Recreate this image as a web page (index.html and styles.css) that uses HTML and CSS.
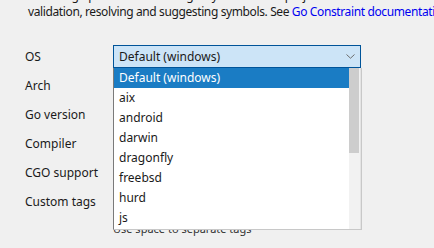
FILE: index.html
```html
<!DOCTYPE html>
<html lang="en">
  <head>
    <meta charset="utf-8" />
    <title>Go Build Tags</title>
    <link rel="stylesheet" href="styles.css">
  </head>
  <body>
    <p class="intro">
      Following options describe target system for the project. IDE will use these values for<br />
      validation, resolving and suggesting symbols. See <a href="#">Go Constraint documentation</a>
    </p>

    <div class="form">
      <div class="row">
        <label>OS</label>
        <div class="combo open">
          <span>Default (windows)</span>
          <svg class="chev" width="9" height="5" viewBox="0 0 9 5">
            <path d="M0.5 0.5 L4.5 4.2 L8.5 0.5" fill="none" stroke="#6d6d6d" stroke-width="1" />
          </svg>
          <div class="popup">
            <ul class="list">
              <li class="sel">Default (windows)</li>
              <li>aix</li>
              <li>android</li>
              <li>darwin</li>
              <li>dragonfly</li>
              <li>freebsd</li>
              <li>hurd</li>
              <li>js</li>
            </ul>
            <div class="scroll"><div class="thumb"></div></div>
          </div>
        </div>
      </div>
      <div class="row"><label>Arch</label><div class="combo"></div></div>
      <div class="row"><label>Go version</label><div class="combo"></div></div>
      <div class="row"><label>Compiler</label><div class="combo"></div></div>
      <div class="row"><label>CGO support</label><div class="combo"></div></div>
      <div class="row"><label>Custom tags</label><div class="combo"></div></div>
      <div class="hint">Use space to separate tags</div>
    </div>
  </body>
</html>
```

FILE: styles.css
```css
body {
  margin: 0;
  background: #f0f0f0;
  font-family: "Segoe UI", "Noto Sans", sans-serif;
  font-size: 12px;
  color: #1a1a1a;
  overflow: hidden;
}
.intro {
  margin: -12px 0 0 28px;
  line-height: 16px;
  letter-spacing: -0.38px;
  white-space: nowrap;
}
.intro a {
  color: #0000f0;
  text-decoration: none;
}
.form {
  margin: 25px 0 0 25px;
  display: flex;
  flex-direction: column;
  gap: 6px;
}
.row {
  display: flex;
  align-items: center;
  height: 23px;
}
.row label {
  width: 88px;
}
.combo {
  width: 248px;
  height: 23px;
  box-sizing: border-box;
  position: relative;
}
.combo.open {
  background: #cce4f7;
  border: 1px solid #005499;
  display: flex;
  align-items: center;
  padding-left: 5px;
}
.chev {
  position: absolute;
  right: 5px;
  top: 8px;
}
.popup {
  position: absolute;
  left: -1px;
  top: 22px;
  width: 249px;
  height: 162px;
  box-sizing: border-box;
  background: #fff;
  border: 1px solid #c8c8c8;
  border-top: none;
  border-left-color: #7a7a7a;
  display: flex;
  z-index: 1;
}
.list {
  list-style: none;
  margin: 0;
  padding: 0;
  flex: 1;
}
.list li {
  height: 20px;
  line-height: 20px;
  padding-left: 5px;
}
.list li.sel {
  background: #1a7cc4;
  color: #fff;
}
.scroll {
  width: 11px;
  background: #f2f2f2;
  border-right: 1px solid #e4e4e4;
}
.thumb {
  width: 10px;
  height: 85px;
  background: #cdcdcd;
}
.hint {
  margin: 3px 0 0 88px;
  font-size: 11px;
  line-height: 14px;
  color: #333;
}
```
